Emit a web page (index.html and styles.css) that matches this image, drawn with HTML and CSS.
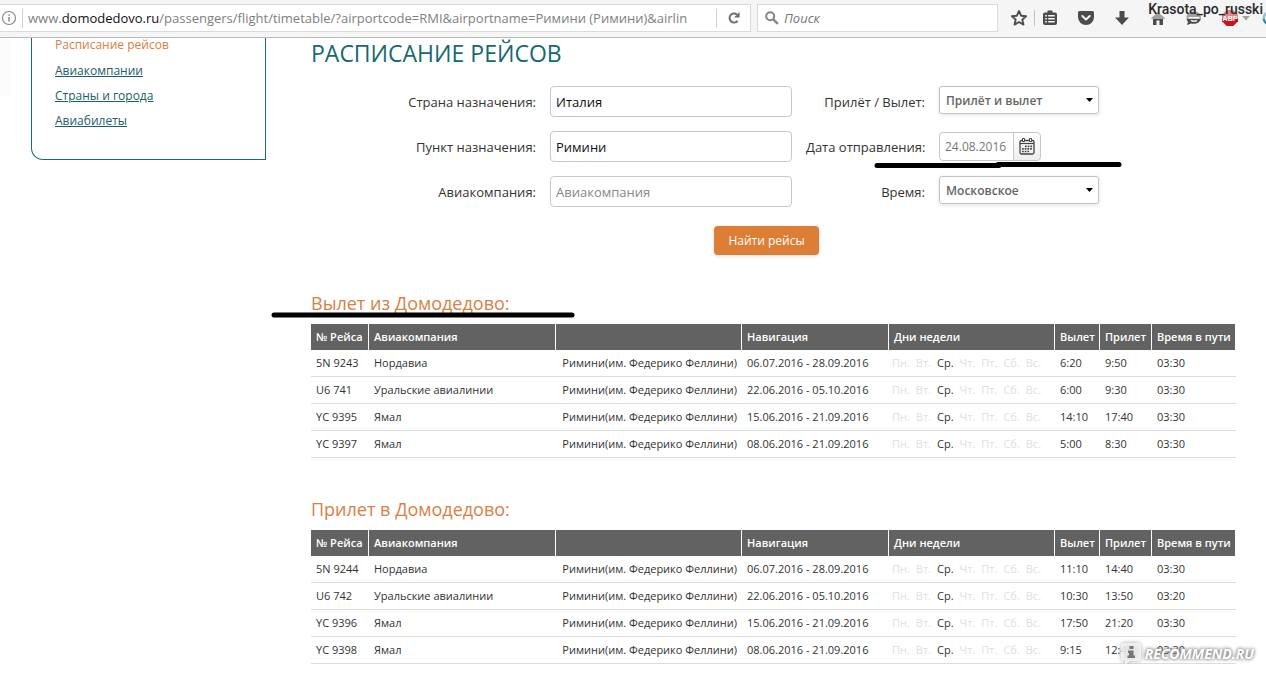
FILE: index.html
```html
<!DOCTYPE html>
<html lang="ru">
<head>
<meta charset="utf-8">
<title>Расписание рейсов</title>
<meta name="viewport" content="width=device-width, initial-scale=1">
<link rel="stylesheet" href="styles.css">
</head>
<body>
<header class="toolbar">
  <div class="address">
    <svg class="address-info" width="16" height="16" viewBox="0 0 16 16" fill="none" stroke="#858585"><circle cx="8" cy="8" r="6.5" stroke-width="1.1"/><path d="M8 7v4.5M8 4.2v1.6" stroke-width="1.5"/></svg>
    <span class="address-url" role="textbox" aria-label="Адрес" tabindex="0">www.<b>domodedovo.ru</b>/passengers/flight/timetable/?airportcode=RMI&amp;airportname=Римини (Римини)&amp;airlin</span>
    <button class="reload" type="button" aria-label="Обновить"><svg width="14" height="14" viewBox="0 0 14 14"><path d="M10.6 9.8A4.5 4.5 0 1 1 10 3.6" fill="none" stroke="#6f6f6f" stroke-width="2"/><path d="M12.6 1v5.6H7z" fill="#6f6f6f"/></svg></button>
  </div>
  <label class="search">
    <svg width="14" height="14" viewBox="0 0 14 14" fill="none" stroke="#858585"><circle cx="5.2" cy="5.2" r="4" stroke-width="2"/><path d="M8.3 8.3l4.5 4.5" stroke-width="2.4"/></svg>
    <input class="search-input" type="text" placeholder="Поиск" aria-label="Поиск">
  </label>
  <nav class="tools" aria-label="Инструменты">
    <button type="button" class="tool" aria-label="Закладка"><svg width="18" height="18" viewBox="0 0 18 18"><path d="M9 2l2.1 4.7 5 .5-3.800 3.400 1.200 5L9 13l-4.500 2.600 1.200-5L1.900 7.200l5-.5z" fill="none" stroke="#4c4c4c" stroke-width="1.900" stroke-linejoin="round"/></svg></button>
    <button type="button" class="tool tool-list" aria-label="Список закладок"><svg width="18" height="18" viewBox="0 0 18 18"><path d="M6.500 1.500h5V3.500H14q2 0 2 2V14q0 2-2 2H4q-2 0-2-2V5.500q0-2 2-2h2.500z" fill="#4c4c4c"/><path d="M4.200 6.700h1.700m1.300 0h6.500M4.200 9.700h1.700m1.300 0h6.500M4.200 12.700h1.700m1.300 0h6.500" stroke="#f5f5f5" stroke-width="1.500"/></svg></button>
    <button type="button" class="tool" aria-label="Pocket"><svg width="18" height="18" viewBox="0 0 18 18"><path d="M2.500 2h13Q17 2 17 3.500V8a8 8 0 0 1-16 0V3.500Q1 2 2.500 2z" fill="#4c4c4c"/><path d="M5.300 7L9 10.500 12.700 7" fill="none" stroke="#f5f5f5" stroke-width="2" stroke-linecap="round" stroke-linejoin="round"/></svg></button>
    <button type="button" class="tool" aria-label="Загрузки"><svg width="18" height="18" viewBox="0 0 18 18"><path d="M6.500 2h5v6.500H16L9 16 2 8.500h4.500z" fill="#4c4c4c"/></svg></button>
    <button type="button" class="tool" aria-label="Домой"><svg width="18" height="18" viewBox="0 0 18 18"><path d="M9 3L2 9.300l1 1L4 9.600V16h3.500v-4.500h3V16H14V9.600l1 .7 1-1z" fill="#4c4c4c"/></svg></button>
    <button type="button" class="tool" aria-label="Чат"><svg width="18" height="18" viewBox="0 0 18 18"><path d="M9 2.500c4.400 0 7 2.600 7 6s-2.900 6.300-7 6.300c-1 0-1.900-.1-2.700-.4L2 16l1-3.200C2 11.700 1.500 10.200 1.500 8.500c0-3.400 3.100-6 7.500-6z" fill="#4c4c4c"/><path d="M3.500 8.800h11M6 11.300q3 1.800 6 0" fill="none" stroke="#f5f5f5" stroke-width="1.400"/></svg></button>
    <button type="button" class="tool" aria-label="Adblock Plus"><svg width="18" height="18" viewBox="0 0 18 18"><path d="M5.700 1h6.600L17 5.700v6.600L12.300 17H5.700L1 12.300V5.700z" fill="#c9141c"/><text x="9" y="11.500" text-anchor="middle" class="abp">ABP</text></svg></button>
    <svg class="caret" width="8" height="5" viewBox="0 0 8 5"><path d="M0 0h8L4 4z" fill="#4c4c4c"/></svg>
    <svg class="edge-icon" width="6" height="16" viewBox="0 0 6 16"><path d="M6 2.500C2.600 3.300 1.200 7 2 10q.8 3 4 3.500" fill="none" stroke="#3b86a5" stroke-width="2.400"/></svg>
  </nav>
  <span class="author">Krasota_po_russki</span>
</header>

<div class="page">
  <aside class="sidebar">
    <nav class="side-nav" aria-label="Разделы">
      <a class="side-link side-current" href="#timetable">Расписание рейсов</a>
      <a class="side-link" href="#airlines">Авиакомпании</a>
      <a class="side-link" href="#cities">Страны и города</a>
      <a class="side-link" href="#tickets">Авиабилеты</a>
    </nav>
  </aside>

  <main class="content" id="timetable">
    <h1 class="title">РАСПИСАНИЕ РЕЙСОВ</h1>
    <form class="filters">
      <label class="label" for="country">Страна назначения:</label>
      <input class="field" id="country" type="text" value="Италия">
      <label class="label" for="direction">Прилёт / Вылет:</label>
      <select class="select" id="direction"><option>Прилёт и вылет</option></select>

      <label class="label label-start" for="city">Пункт назначения:</label>
      <input class="field" id="city" type="text" value="Римини">
      <label class="label" for="date">Дата отправления:</label>
      <div class="date">
        <input class="date-field" id="date" type="text" value="24.08.2016">
        <button class="date-button" type="button" aria-label="Календарь"><svg width="16" height="17" viewBox="0 0 16 17"><rect x="1" y="2.500" width="14" height="13.500" rx="1.500" fill="none" stroke="#444" stroke-width="1.300"/><path d="M1 5.500h14" stroke="#444" stroke-width="1.200"/><path d="M3.500.5h2v3h-2zM10.500.5h2v3h-2z" fill="#fff" stroke="#444"/><path d="M6 8.300h7.500M3 10.900h10.500M3 13.500h8" stroke="#444" stroke-width="1.700" stroke-dasharray="1.700 1"/></svg></button>
        <svg class="mark mark-date" width="248" height="6" viewBox="0 0 248 6"><path d="M3 3.500h122M124 2.500h121" stroke="#000" stroke-width="5" stroke-linecap="round"/></svg>
      </div>

      <label class="label label-start" for="airline">Авиакомпания:</label>
      <input class="field" id="airline" type="text" placeholder="Авиакомпания">
      <label class="label" for="time">Время:</label>
      <select class="select" id="time"><option>Московское</option></select>

      <div class="actions"><button class="submit" type="submit">Найти рейсы</button></div>
    </form>

    <section class="flights">
      <h2 class="subtitle">Вылет из Домодедово:<svg class="mark mark-title" width="304" height="6" viewBox="0 0 304 6"><path d="M3 3h298" stroke="#000" stroke-width="5" stroke-linecap="round"/></svg></h2>
      <table class="table">
        <colgroup><col class="c-num"><col><col><col class="c-nav"><col class="c-days"><col class="c-dep"><col class="c-arr"><col class="c-time"></colgroup>
        <thead><tr><th>№ Рейса</th><th>Авиакомпания</th><th></th><th>Навигация</th><th>Дни недели</th><th>Вылет</th><th>Прилет</th><th>Время в пути</th></tr></thead>
        <tbody>
          <tr><td>5N 9243</td><td>Нордавиа</td><td class="place">Римини(им. Федерико Феллини)</td><td>06.07.2016 - 28.09.2016</td><td class="days"><span>Пн.</span><span>Вт.</span><span class="on">Ср.</span><span>Чт.</span><span>Пт.</span><span>Сб.</span><span>Вс.</span></td><td>6:20</td><td>9:50</td><td>03:30</td></tr>
          <tr><td>U6 741</td><td>Уральские авиалинии</td><td class="place">Римини(им. Федерико Феллини)</td><td>22.06.2016 - 05.10.2016</td><td class="days"><span>Пн.</span><span>Вт.</span><span class="on">Ср.</span><span>Чт.</span><span>Пт.</span><span>Сб.</span><span>Вс.</span></td><td>6:00</td><td>9:30</td><td>03:30</td></tr>
          <tr><td>YC 9395</td><td>Ямал</td><td class="place">Римини(им. Федерико Феллини)</td><td>15.06.2016 - 21.09.2016</td><td class="days"><span>Пн.</span><span>Вт.</span><span class="on">Ср.</span><span>Чт.</span><span>Пт.</span><span>Сб.</span><span>Вс.</span></td><td>14:10</td><td>17:40</td><td>03:30</td></tr>
          <tr><td>YC 9397</td><td>Ямал</td><td class="place">Римини(им. Федерико Феллини)</td><td>08.06.2016 - 21.09.2016</td><td class="days"><span>Пн.</span><span>Вт.</span><span class="on">Ср.</span><span>Чт.</span><span>Пт.</span><span>Сб.</span><span>Вс.</span></td><td>5:00</td><td>8:30</td><td>03:30</td></tr>
        </tbody>
      </table>
    </section>

    <section class="flights">
      <h2 class="subtitle">Прилет в Домодедово:</h2>
      <table class="table">
        <colgroup><col class="c-num"><col><col><col class="c-nav"><col class="c-days"><col class="c-dep"><col class="c-arr"><col class="c-time"></colgroup>
        <thead><tr><th>№ Рейса</th><th>Авиакомпания</th><th></th><th>Навигация</th><th>Дни недели</th><th>Вылет</th><th>Прилет</th><th>Время в пути</th></tr></thead>
        <tbody>
          <tr><td>5N 9244</td><td>Нордавиа</td><td class="place">Римини(им. Федерико Феллини)</td><td>06.07.2016 - 28.09.2016</td><td class="days"><span>Пн.</span><span>Вт.</span><span class="on">Ср.</span><span>Чт.</span><span>Пт.</span><span>Сб.</span><span>Вс.</span></td><td>11:10</td><td>14:40</td><td>03:30</td></tr>
          <tr><td>U6 742</td><td>Уральские авиалинии</td><td class="place">Римини(им. Федерико Феллини)</td><td>22.06.2016 - 05.10.2016</td><td class="days"><span>Пн.</span><span>Вт.</span><span class="on">Ср.</span><span>Чт.</span><span>Пт.</span><span>Сб.</span><span>Вс.</span></td><td>10:30</td><td>13:50</td><td>03:20</td></tr>
          <tr><td>YC 9396</td><td>Ямал</td><td class="place">Римини(им. Федерико Феллини)</td><td>15.06.2016 - 21.09.2016</td><td class="days"><span>Пн.</span><span>Вт.</span><span class="on">Ср.</span><span>Чт.</span><span>Пт.</span><span>Сб.</span><span>Вс.</span></td><td>17:50</td><td>21:20</td><td>03:30</td></tr>
          <tr><td>YC 9398</td><td>Ямал</td><td class="place">Римини(им. Федерико Феллини)</td><td>08.06.2016 - 21.09.2016</td><td class="days"><span>Пн.</span><span>Вт.</span><span class="on">Ср.</span><span>Чт.</span><span>Пт.</span><span>Сб.</span><span>Вс.</span></td><td>9:15</td><td>12:45</td><td>03:30</td></tr>
        </tbody>
      </table>
    </section>
  </main>
  <div class="watermark">
    <svg class="watermark-logo" width="22" height="24" viewBox="0 0 22 24"><path d="M5 1h12q4 0 4 4v10q0 4-4 4h-7l-5 4v-4q-4 0-4-4V5q0-4 4-4z" fill="#fff" fill-opacity=".75"/><path d="M9.500 4h4v3h-4zM8 8.500h5.500v5H15V16H7.500v-2.500H9V11H8z" fill="#777"/></svg>
    <span>RECOMMEND.RU</span>
  </div>
</div>
</body>
</html>
```
FILE: styles.css
```css
* { box-sizing: border-box; }
body {
  margin: 0;
  background: #fff;
  color: #333;
  font-family: "Open Sans", "Noto Sans", sans-serif;
  font-size: 13px;
}
button { padding: 0; border: 0; background: none; font: inherit; }
input, select { font: inherit; }
svg { display: block; flex: none; }

.toolbar {
  position: relative;
  display: flex;
  align-items: center;
  height: 38px;
  overflow: hidden;
  padding-bottom: 1px;
  background: #f5f5f5;
  border-bottom: 1px solid #b9b9b9;
}
.address, .search {
  display: flex;
  align-items: center;
  height: 28px;
  background: #fff;
  border: 1px solid #dadada;
}
.address { flex: 1; min-width: 0; border-left: 0; }
.address-info { margin: 0 5px 0 1px; }
.address-url {
  flex: 1;
  min-width: 0;
  margin-right: 26px;
  padding-left: 5px;
  overflow: hidden;
  border-left: 1px solid #d0d0d0;
  color: #808080;
  font-size: 13px;
  line-height: 19px;
  white-space: nowrap;
}
.address-url b { color: #111; font-weight: 400; }
.reload {
  display: flex;
  align-items: center;
  justify-content: center;
  width: 34px;
  height: 19px;
  border-left: 1px solid #d0d0d0;
}
.search { flex: 0 1 241px; min-width: 0; margin-left: 6px; padding: 0 7px; gap: 5px; }
.search-input {
  flex: 1;
  min-width: 0;
  padding: 0;
  border: 0;
  background: none;
  font-size: 13px;
}
.search-input::placeholder { color: #777; font-style: italic; }
.tools { flex: none; display: flex; align-items: center; width: 268px; padding-left: 12px; gap: 18px; }
.tool { flex: none; width: 18px; height: 18px; }
.tool-list { position: relative; margin-left: -5px; }
.tool-list::before {
  content: "";
  position: absolute;
  top: 1px;
  left: -7px;
  height: 16px;
  border-left: 1px solid #c4c4c4;
}
.abp { fill: #fff; font: bold 7px "Liberation Sans", sans-serif; }
.caret { margin-left: -15px; }
.edge-icon { margin-left: -6px; }
.author {
  position: absolute;
  top: 0;
  right: 0;
  padding: 0 3px 0 5px;
  background: rgba(245, 245, 245, .5);
  color: #2b2b2b;
  font: 500 14px/19px Roboto, sans-serif;
}

.page { position: relative; display: flex; align-items: flex-start; padding: 0 30px 0 31px; }
.page::before {
  content: "";
  position: absolute;
  top: 0;
  left: 0;
  width: 11px;
  height: 58px;
  background: #fcfcfc;
}
.sidebar {
  flex: none;
  width: 235px;
  margin-right: 45px;
  padding: 0 23px 29px;
  border: solid #1b6b70;
  border-width: 0 1px 1px;
  border-bottom-left-radius: 12px;
}
.side-nav { display: flex; flex-direction: column; align-items: flex-start; gap: 7px; }
.side-link { color: #1b6066; font-size: 12px; line-height: 18px; }
.side-current { margin: -2px 0 1px; color: #d9803f; text-decoration: none; }

.content { flex: 1; min-width: 0; }
.title { margin: 0; color: #16696f; font-size: 23px; font-weight: 400; line-height: 30px; }
.filters {
  display: grid;
  grid-template-columns: 225px 242px 119px 160px 1fr;
  column-gap: 14px;
  row-gap: 14px;
  align-items: center;
  padding: 18px 14px 0 0;
}
.label { text-align: right; white-space: nowrap; }
.label-start { grid-column: 1; }
.field {
  width: 100%;
  height: 31px;
  padding: 0 5px;
  border: 1px solid #c8c8c8;
  border-radius: 4px;
  color: #111;
}
.field::placeholder { color: #888; }
.select {
  align-self: start;
  width: 100%;
  height: 28px;
  padding: 0 6px;
  appearance: none;
  border: 1px solid #c4c4c4;
  border-radius: 3px;
  background: #fff url("data:image/svg+xml,%3Csvg xmlns='http://www.w3.org/2000/svg' width='7' height='4'%3E%3Cpath d='M0 0h7L3.5 4z'/%3E%3C/svg%3E") no-repeat right 5px center / 7px 4px;
  box-shadow: 0 1px 4px rgba(0, 0, 0, .12);
  color: #666;
  font-size: 12px;
  font-weight: 600;
}
.date { position: relative; display: flex; width: 102px; height: 29px; }
.date-field {
  flex: 1;
  min-width: 0;
  padding: 0 0 0 5px;
  border: 1px solid #c8c8c8;
  border-radius: 4px 0 0 4px;
  color: #777;
  font-size: 12px;
}
.date-button {
  display: flex;
  align-items: center;
  justify-content: center;
  width: 28px;
  margin-left: -1px;
  border: 1px solid #c8c8c8;
  border-radius: 0 4px 4px 0;
  background: linear-gradient(#fff, #eee);
}
.mark { position: absolute; }
.mark-date { top: 30px; left: -65px; }
.mark-title { top: 21px; left: -40px; }
.actions { grid-column: 1 / -1; display: flex; justify-content: center; padding-top: 5px; }
.submit {
  height: 29px;
  padding: 0 14px;
  border-radius: 4px;
  background: #dc7e35;
  box-shadow: 0 1px 4px rgba(0, 0, 0, .15);
  color: #fff;
  font-size: 12px;
}

.flights { margin-top: 36px; }
.flights + .flights { margin-top: 39px; }
.subtitle {
  position: relative;
  margin: 0 0 8px;
  color: #d98045;
  font-size: 18px;
  font-weight: 400;
  line-height: 25px;
}
.table { width: 100%; table-layout: fixed; border-collapse: collapse; font-size: 11px; line-height: 16px; }
.c-num { width: 58px; }
.c-nav { width: 147px; }
.c-days { width: 166px; }
.c-dep { width: 45px; }
.c-arr { width: 52px; }
.c-time { width: 84px; }
.table th, .table td { padding: 5px 0 5px 5px; text-align: left; white-space: nowrap; }
.table th {
  background: #626262;
  box-shadow: inset -1px 0 #fff;
  color: #fff;
  font-weight: 600;
}
.table td { border-bottom: 1px solid #ddd; }
.table .place { padding-right: 5px; text-align: right; }
.table .days { padding-left: 3px; }
.days span { margin-right: 6px; color: #e0e0e0; }
.days .on { color: #333; }

.watermark {
  position: absolute;
  right: 12px;
  bottom: -2px;
  display: flex;
  align-items: center;
  gap: 3px;
  color: #fff;
  font: italic bold 14px/24px "Open Sans", sans-serif;
  text-shadow: 0 0 3px #777, 0 0 4px #888;
}
.watermark-logo { filter: drop-shadow(0 0 2px #888); }
```
